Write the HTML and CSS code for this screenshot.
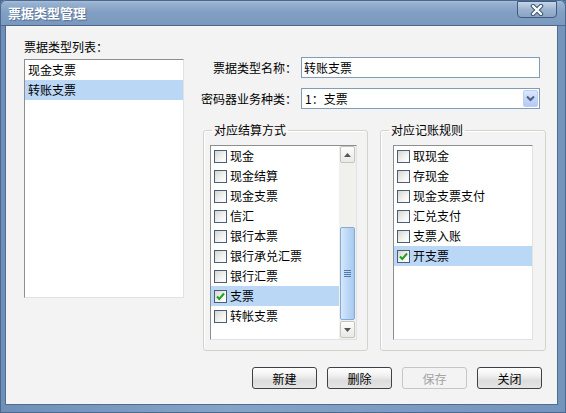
FILE: index.html
```html
<!DOCTYPE html>
<html lang="zh-CN">
<head>
  <meta charset="UTF-8" />
  <title>票据类型管理</title>
  <link rel="stylesheet" href="styles.css">
</head>
<body>
  <div class="window">
    <div class="titlebar">
      <span class="title">票据类型管理</span>
      <button class="close-btn" title="关闭">
        <svg width="16" height="12" viewBox="0 0 16 12">
          <path d="M4 2 L12 10 M12 2 L4 10" stroke="#3d5878" stroke-width="4.5" stroke-linecap="round"/>
          <path d="M4 2 L12 10 M12 2 L4 10" stroke="#ffffff" stroke-width="2.4" stroke-linecap="round"/>
        </svg>
      </button>
    </div>

    <div class="client">
      <div class="left-col">
        <div class="caption">票据类型列表：</div>
        <ul class="listbox type-list">
          <li>现金支票</li>
          <li class="selected">转账支票</li>
        </ul>
      </div>

      <div class="right-col">
        <div class="field">
          <label class="field-label">票据类型名称：</label>
          <input class="text-input" type="text" value="转账支票">
        </div>
        <div class="field">
          <label class="field-label">密码器业务种类：</label>
          <div class="combo">
            <span class="combo-text">1：支票</span>
            <span class="combo-btn">
              <svg width="9" height="7" viewBox="0 0 9 7">
                <polyline points="1,1.5 4.5,5 8,1.5" fill="none" stroke="#4d6185" stroke-width="2"/>
              </svg>
            </span>
          </div>
        </div>

        <div class="groups">
          <fieldset class="group group-settle">
            <legend>对应结算方式</legend>
            <div class="listbox check-list">
              <ul class="items">
                <li><span class="check"></span>现金</li>
                <li><span class="check"></span>现金结算</li>
                <li><span class="check"></span>现金支票</li>
                <li><span class="check"></span>信汇</li>
                <li><span class="check"></span>银行本票</li>
                <li><span class="check"></span>银行承兑汇票</li>
                <li><span class="check"></span>银行汇票</li>
                <li class="selected"><span class="check checked"><svg width="11" height="11" viewBox="0 0 11 11"><path d="M2 5.5 L4.3 8 L9 2.5" fill="none" stroke="#21a121" stroke-width="2"/></svg></span>支票</li>
                <li><span class="check"></span>转帐支票</li>
              </ul>
              <div class="scrollbar">
                <span class="sb-btn">
                  <svg width="7" height="4" viewBox="0 0 7 4"><polygon points="0,4 3.5,0 7,4" fill="#555"/></svg>
                </span>
                <div class="sb-track">
                  <span class="sb-thumb">
                    <i></i><i></i><i></i><i></i>
                  </span>
                </div>
                <span class="sb-btn">
                  <svg width="7" height="4" viewBox="0 0 7 4"><polygon points="0,0 3.5,4 7,0" fill="#555"/></svg>
                </span>
              </div>
            </div>
          </fieldset>

          <fieldset class="group group-rules">
            <legend>对应记账规则</legend>
            <div class="listbox check-list">
              <ul class="items">
                <li><span class="check"></span>取现金</li>
                <li><span class="check"></span>存现金</li>
                <li><span class="check"></span>现金支票支付</li>
                <li><span class="check"></span>汇兑支付</li>
                <li><span class="check"></span>支票入账</li>
                <li class="selected"><span class="check checked"><svg width="11" height="11" viewBox="0 0 11 11"><path d="M2 5.5 L4.3 8 L9 2.5" fill="none" stroke="#21a121" stroke-width="2"/></svg></span>开支票</li>
              </ul>
            </div>
          </fieldset>
        </div>
      </div>

      <div class="actions">
        <button class="btn">新建</button>
        <button class="btn">删除</button>
        <button class="btn" disabled>保存</button>
        <button class="btn">关闭</button>
      </div>
    </div>
  </div>
</body>
</html>
```

FILE: styles.css
```css
html, body {
  margin: 0;
  padding: 0;
}

body {
  font-family: "Noto Sans CJK SC", "Liberation Sans", sans-serif;
  font-size: 12px;
  color: #000;
  background: #f3f3f3;
}

.window {
  width: 566px;
  height: 413px;
  box-sizing: border-box;
  display: flex;
  flex-direction: column;
  background: linear-gradient(to right, #6f8fb6, #86a3c6 40%, #7594bb);
  box-shadow: inset 0 0 0 1px #4a6890;
}

/* title bar */
.titlebar {
  height: 26px;
  flex: none;
  display: flex;
  align-items: flex-start;
  background: linear-gradient(to bottom, #b4c8df 0, #97b1cf 3px, #839fc3 12px, #7a97bd 100%);
  border-radius: 6px 6px 0 0;
  box-shadow: inset 0 0 0 1px #4a6890;
}

.title {
  padding-left: 8px;
  line-height: 25px;
  font-size: 13px;
  font-weight: bold;
  color: #fff;
  text-shadow: 1px 1px 1px #4e6b91;
}

.close-btn {
  margin: 1px 9px 0 auto;
  width: 40px;
  height: 17px;
  padding: 0;
  display: flex;
  align-items: center;
  justify-content: center;
  border: 1px solid #3f5b82;
  border-radius: 0 0 4px 4px;
  background: linear-gradient(to bottom, #c7d5e6, #9db4d0 50%, #8aa3c3);
}

/* client area */
.client {
  flex: 1;
  margin: 0 8px 8px 5px;
  border: 1px solid #4e6c94;
  border-top: none;
  background: #f3f3f3;
  display: grid;
  grid-template-columns: 160px 345px;
  grid-template-rows: auto 1fr;
  column-gap: 17px;
  padding: 0 9px 0 18px;
}

.left-col {
  padding-top: 14px;
}

.caption {
  line-height: 14px;
  margin-bottom: 5px;
}

.listbox {
  margin: 0;
  padding: 0;
  list-style: none;
  background: #fff;
  border: 1px solid;
  border-color: #8e8e8e #e2e2e2 #e2e2e2 #8e8e8e;
  box-sizing: border-box;
}

.type-list {
  height: 239px;
}

.type-list li {
  line-height: 20px;
  height: 20px;
  padding-left: 3px;
}

.selected {
  background: #bbd7f6;
}

.right-col {
  padding-top: 31px;
}

.field {
  display: flex;
  align-items: center;
  margin-bottom: 10px;
}

.field-label {
  width: 96px;
  margin-right: 4px;
  text-align: right;
  white-space: nowrap;
}

.text-input, .combo {
  width: 239px;
  height: 21px;
  box-sizing: border-box;
  border: 1px solid #7f9db9;
  background: #fff;
}

.text-input {
  font: inherit;
  padding: 0 2px;
  outline: none;
}

.combo {
  display: flex;
  align-items: center;
  padding-left: 3px;
}

.combo-text {
  flex: 1;
}

.combo-btn {
  width: 15px;
  height: 17px;
  margin-right: 1px;
  display: flex;
  align-items: center;
  justify-content: center;
  border: 1px solid #bccef3;
  border-radius: 2px;
  box-sizing: border-box;
  background: linear-gradient(to bottom, #dde7fb, #c3d4f7 60%, #b5c9f3);
}

/* group boxes */
.groups {
  display: grid;
  grid-template-columns: 165px 166px;
  column-gap: 12px;
  margin-top: 14px;
  margin-left: 2px;
}

.group {
  margin: 0;
  padding: 0;
  min-width: 0;
  border: 1px solid #d3d3cc;
  border-radius: 3px;
  box-shadow: inset 1px 1px 0 #fff;
}

.group legend {
  margin-left: 8px;
  padding: 0 2px;
  line-height: 14px;
}

.check-list {
  display: flex;
  height: 195px;
  margin-top: 8px;
  margin-bottom: 10px;
}

.group-settle .check-list {
  margin-left: 6px;
  margin-right: 10px;
}

.group-rules .check-list {
  margin-left: 12px;
  margin-right: 12px;
}

.items {
  flex: 1;
  margin: 0;
  padding: 0;
  list-style: none;
}

.items li {
  height: 20px;
  line-height: 20px;
  display: flex;
  align-items: center;
  padding-left: 3px;
  white-space: nowrap;
}

.check {
  width: 13px;
  height: 13px;
  box-sizing: border-box;
  margin-right: 3px;
  border: 1px solid #4a5c78;
  background: linear-gradient(135deg, #d6d6d0, #f4f4f2 60%, #fff);
  display: flex;
  align-items: center;
  justify-content: center;
}

/* scrollbar */
.scrollbar {
  width: 17px;
  display: flex;
  flex-direction: column;
  background: #f0f0ec;
  padding: 0 1px 1px 1px;
  box-sizing: border-box;
}

.sb-btn {
  height: 17px;
  flex: none;
  display: flex;
  align-items: center;
  justify-content: center;
  border: 1px solid #c4c4c4;
  border-radius: 2px;
  box-sizing: border-box;
  background: linear-gradient(to bottom, #fdfdfd, #e8e8e6);
}

.sb-track {
  flex: 1;
  display: flex;
  flex-direction: column;
  justify-content: flex-end;
  padding-bottom: 1px;
}

.sb-thumb {
  height: 93px;
  box-sizing: border-box;
  border: 1px solid #88a9d4;
  border-radius: 2px;
  background: linear-gradient(to right, #d7e8fb, #bcd8f7 50%, #a8c9f0);
  display: flex;
  flex-direction: column;
  align-items: center;
  justify-content: center;
  gap: 1px;
}

.sb-thumb i {
  display: block;
  width: 7px;
  height: 1px;
  background: #4f7aa6;
}

/* buttons */
.actions {
  grid-column: 1 / span 2;
  display: flex;
  justify-content: flex-end;
  gap: 10px;
  padding-top: 16px;
  padding-right: 4px;
  align-items: flex-start;
}

.btn {
  width: 65px;
  height: 22px;
  padding: 0;
  font: inherit;
  color: #000;
  border: 1px solid #3f4147;
  border-radius: 3px;
  background: linear-gradient(to bottom, #ffffff 0%, #f2f2f2 35%, #dcdcdc 65%, #e6e6e6 100%);
}

.btn:disabled {
  color: #a4a4a4;
  border-color: #c6c6c6;
  background: #f3f3f3;
}
```
